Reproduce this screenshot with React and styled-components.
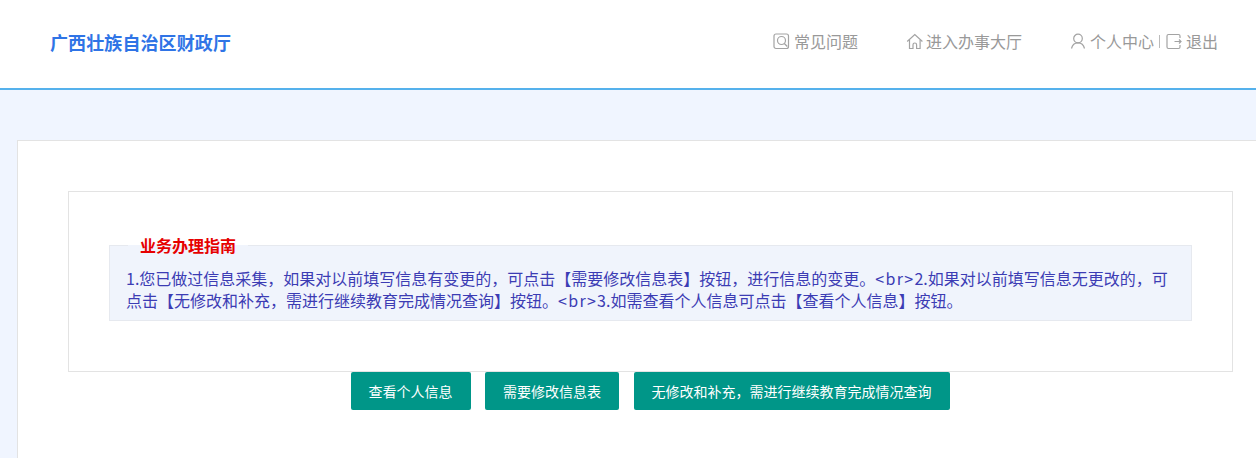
import React from "react";
import styled, { createGlobalStyle } from "styled-components";

const Global = createGlobalStyle`
  html, body { margin: 0; padding: 0; height: 458px; overflow: hidden; background: #f0f5ff; }
  * { box-sizing: border-box; }
  body { font-family: "Noto Sans CJK SC", "Liberation Sans", sans-serif; }
`;

const Header = styled.header`
  height: 90px;
  background: #fff;
  border-bottom: 2px solid #55b1ec;
  display: flex;
  align-items: center;
  justify-content: space-between;
  padding: 0 38px 5px 50px;
`;
const Brand = styled.div`
  font-size: 18px;
  font-weight: 700;
  letter-spacing: 0.1px;
  color: #2f74e6;
`;
const Nav = styled.nav`
  display: flex;
  align-items: center;
  gap: 47px;
  margin-bottom: 1px;
`;
const NavGroup = styled.div`
  display: flex;
  align-items: center;
`;
const NavLink = styled.a`
  display: flex;
  align-items: center;
  gap: 3px;
  font-size: 16px;
  color: #999;
`;
const Divider = styled.span`
  width: 1px;
  height: 13px;
  background: #bbb;
  margin: 0 5px 0 5px;
`;
const Card = styled.main`
  margin: 50px 0 0 17px;
  height: 330px;
  background: #fff;
  border: 1px solid #e3e3e3;
  border-right: 0;
  padding: 50px 23px 0 50px;
`;
const GuideBox = styled.section`
  height: 181px;
  border: 1px solid #e3e3e3;
  padding: 42px 40px 0 40px;
`;
const Fieldset = styled.fieldset`
  margin: 0;
  padding: 0 16px;
  height: 87px;
  background: #f0f4fc;
  border: 1px solid #e6e9ef;
`;
const Legend = styled.legend`
  margin-left: 2px;
  padding: 0 12px;
  font-size: 16px;
  font-weight: 700;
  line-height: 22px;
  color: #e60000;
`;
const Guide = styled.p`
  margin: 11px 0 0;
  font-size: 16px;
  line-height: 22px;
  color: #3c3cb4;
`;
const Tag = styled.span`
  letter-spacing: 1.3px;
`;
const Actions = styled.div`
  display: flex;
  justify-content: center;
  gap: 14.5px;
  margin-left: -1px;
`;
const Button = styled.button`
  height: 38px;
  padding: 0 18px;
  border: 0;
  border-radius: 2px;
  background: #009688;
  color: #fff;
  font-family: inherit;
  font-size: 14px;
  white-space: nowrap;
`;

const Icon = ({ children }) => (
  <svg width="18" height="18" viewBox="0 0 18 18" fill="none" stroke="#a3a3a3" strokeWidth="1.2">
    {children}
  </svg>
);

export default function App() {
  return (
    <>
      <Global />
      <Header>
        <Brand>广西壮族自治区财政厅</Brand>
        <Nav>
          <NavLink>
            <Icon>
              <rect x="1" y="2" width="14.5" height="14.5" rx="2" />
              <circle cx="8.5" cy="8.5" r="4" />
              <path d="M11.3 11.5l3 3" />
            </Icon>
            常见问题
          </NavLink>
          <NavLink>
            <Icon>
              <path d="M2.2 9.5 9.8 2.5l7.6 7" />
              <path d="M4.5 8v8.5h3.5v-3.7a1.8 1.8 0 0 1 3.6 0v3.7h3.5V8" />
            </Icon>
            进入办事大厅
          </NavLink>
          <NavGroup>
            <NavLink>
              <Icon>
                <circle cx="9" cy="6.5" r="4.3" />
                <path d="M2.5 16.5c.8-3.6 3-5.7 6.5-5.7s5.7 2.1 6.5 5.7" />
              </Icon>
              个人中心
            </NavLink>
            <Divider />
            <NavLink>
              <Icon>
                <path d="M15 6V4a1.5 1.5 0 0 0-1.5-1.5h-10A1.5 1.5 0 0 0 2 4v11a1.5 1.5 0 0 0 1.5 1.5h10A1.5 1.5 0 0 0 15 15v-2" />
                <path d="M9.5 9.5h6.5M14 7.5l2 2-2 2" />
              </Icon>
              退出
            </NavLink>
          </NavGroup>
        </Nav>
      </Header>
      <Card>
        <GuideBox>
          <Fieldset>
            <Legend>业务办理指南</Legend>
            <Guide>
              1.您已做过信息采集，如果对以前填写信息有变更的，可点击【需要修改信息表】按钮，进行信息的变更。<Tag>&lt;br&gt;</Tag>2.如果对以前填写信息无更改的，可点击【无修改和补充，需进行继续教育完成情况查询】按钮。<Tag>&lt;br&gt;</Tag>3.如需查看个人信息可点击【查看个人信息】按钮。
            </Guide>
          </Fieldset>
        </GuideBox>
        <Actions>
          <Button>查看个人信息</Button>
          <Button>需要修改信息表</Button>
          <Button>无修改和补充，需进行继续教育完成情况查询</Button>
        </Actions>
      </Card>
    </>
  );
}
